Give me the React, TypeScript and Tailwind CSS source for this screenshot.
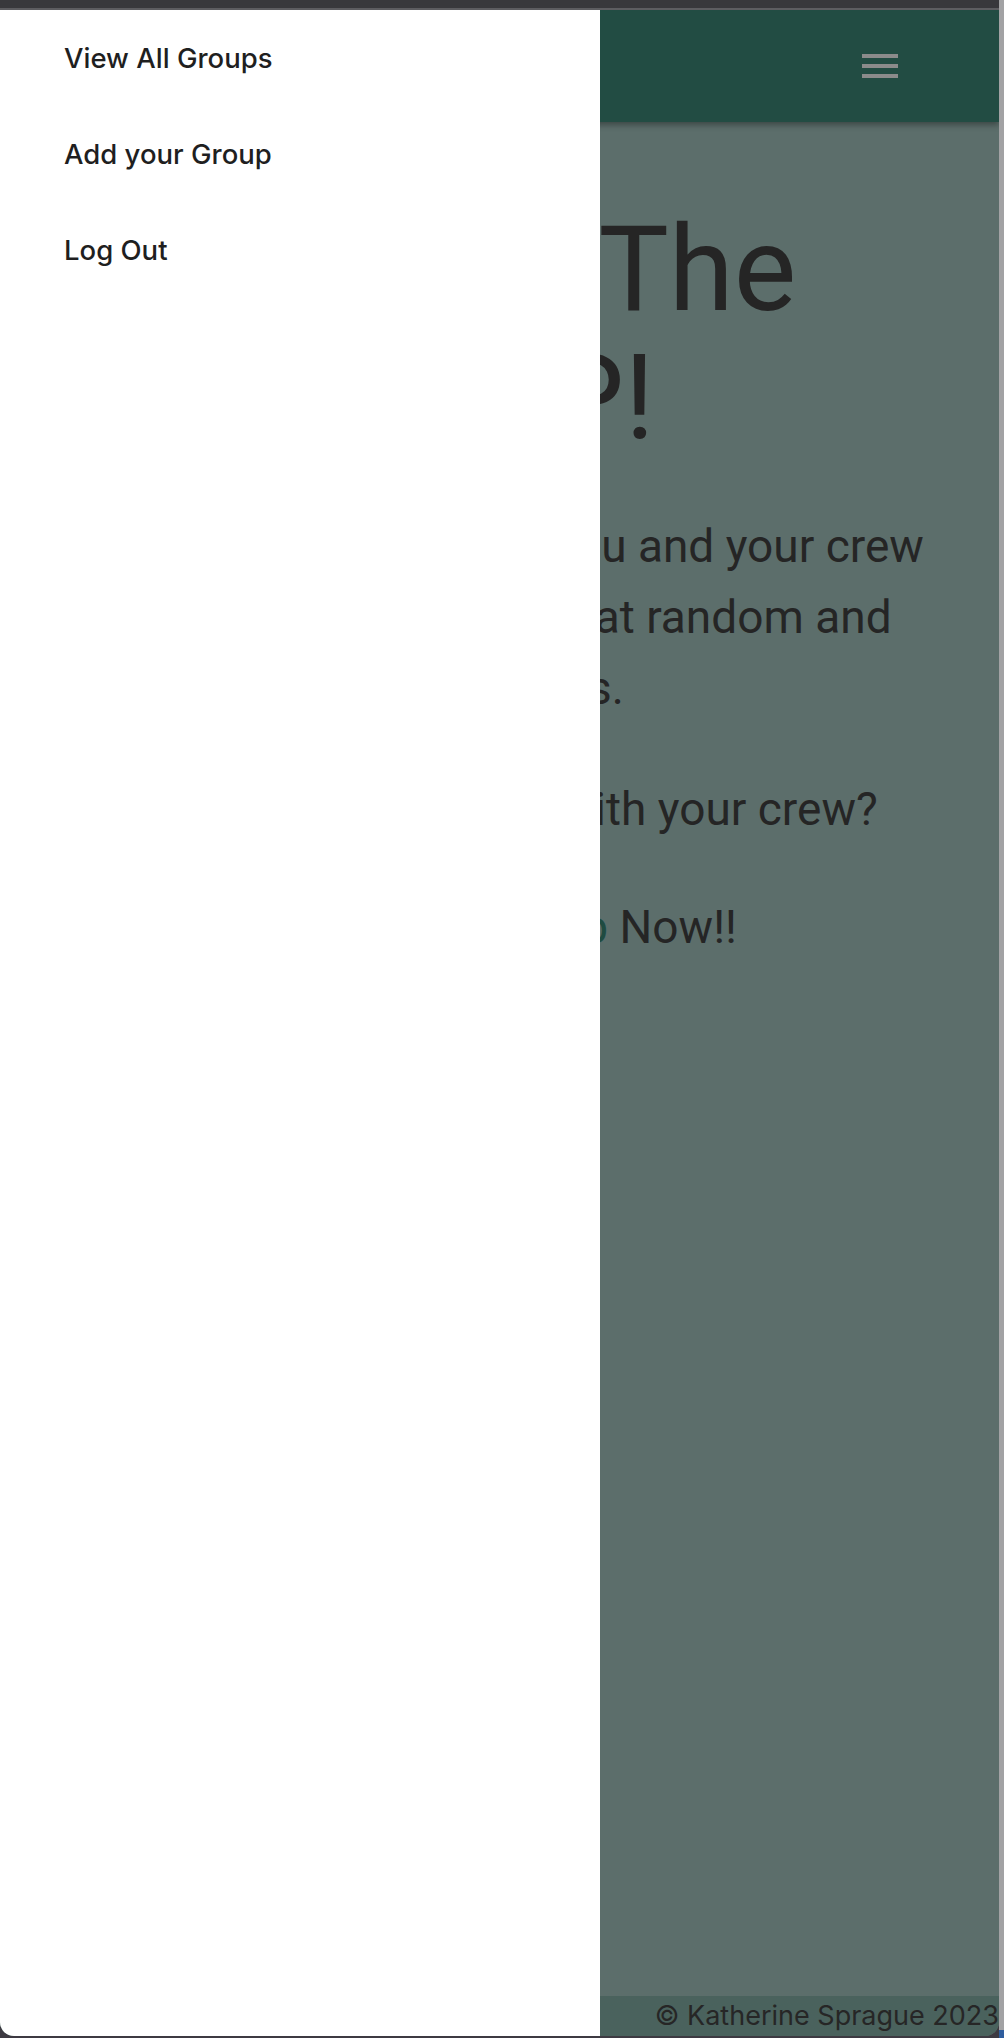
const navLinks = ['View All Groups', 'Add your Group', 'Log Out'];

function Hamburger() {
  return (
    <button className="flex flex-col gap-[6px]" aria-label="Toggle navigation">
      <span className="block w-[36px] h-[4px] bg-[#8b8b8b]" />
      <span className="block w-[36px] h-[4px] bg-[#8b8b8b]" />
      <span className="block w-[36px] h-[4px] bg-[#8b8b8b]" />
    </button>
  );
}

export default function App() {
  return (
    <div className="flex w-[1004px] h-[2038px] bg-[#3d3a42] overflow-hidden">
      <div className="w-[999px] flex flex-col">
        {/* browser chrome strip */}
        <div className="h-[8px] bg-[#38383c]" />
        <div className="h-[2px] bg-[#5d5d61]" />

        {/* page */}
        <div className="relative h-[2026px] rounded-b-[14px] overflow-hidden bg-[#5c6e6b] flex flex-col">
          {/* Navbar */}
          <nav className="relative z-10 h-[112px] shrink-0 bg-[#224c43] shadow-[0_3px_6px_rgba(0,0,0,0.35)] flex items-center justify-end pr-[101px]">
            <Hamburger />
          </nav>

          {/* Hero */}
          <main className="flex-1 pl-[52px] pt-[84px] text-[#252525]" style={{ fontFamily: 'Roboto, sans-serif' }}>
            <h1 className="text-[118px] leading-[128px] font-normal mb-[49px]">
              <span className="block whitespace-nowrap">Join Us In The</span>
              <span className="block whitespace-nowrap">ROUND UP!</span>
            </h1>
            <p className="text-[46px] leading-[71px] mb-[50px]">
              <span className="block whitespace-nowrap">The ROUND Up is where you and your crew</span>
              <span className="block whitespace-nowrap">could choose your activity at random and</span>
              <span className="block whitespace-nowrap">go have a blast with friends.</span>
            </p>
            <p className="text-[46px] leading-[71px] mb-[47px] whitespace-nowrap">
              Hoping to plan a fun day with your crew?
            </p>
            <p className="text-[46px] leading-[71px] whitespace-nowrap">
              Don't miss out, and <a href="#" className="text-[#1f4b41]">Sign Up</a> Now!!
            </p>
          </main>

          {/* Footer */}
          <footer
            className="h-[40px] shrink-0 bg-[#4a625d] text-right text-[27px] leading-[40px] text-[#262626] whitespace-nowrap"
            style={{ fontFamily: 'Inter, sans-serif' }}
          >
            © Katherine Sprague 2023
          </footer>

          {/* Offcanvas menu over the page */}
          <aside
            className="absolute left-0 top-0 bottom-0 z-20 w-[600px] bg-white pt-[27px] pl-[64px]"
            style={{ fontFamily: 'Inter, sans-serif' }}
          >
            <ul className="flex flex-col gap-[54px]">
              {navLinks.map((link) => (
                <li key={link}>
                  <a href="#" className="block text-[27.5px] leading-[42px] font-medium text-[#1f1f1f]">
                    {link}
                  </a>
                </li>
              ))}
            </ul>
          </aside>
        </div>
      </div>

      {/* window edge */}
      <div className="w-[5px] flex flex-col">
        <div className="h-[2030px] bg-[#a2a2a4]" />
        <div className="flex-1 bg-[#2f5d9e]" />
      </div>
    </div>
  );
}
